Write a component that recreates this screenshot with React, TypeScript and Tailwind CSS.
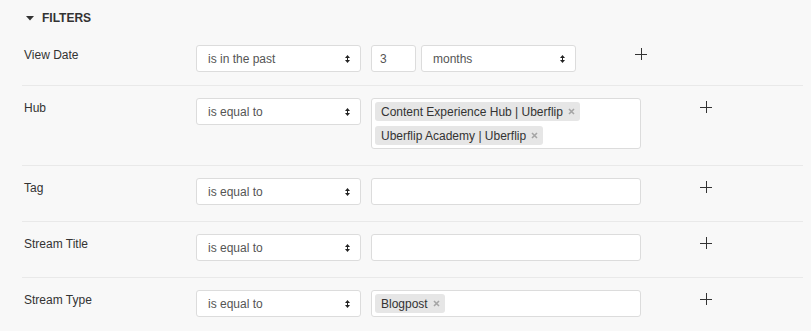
import React from 'react';

type Filter = {
  label: string;
  op: string;
  kind: 'date' | 'multi';
  tags?: string[];
};

const filters: Filter[] = [
  { label: 'View Date', op: 'is in the past', kind: 'date' },
  { label: 'Hub', op: 'is equal to', kind: 'multi', tags: ['Content Experience Hub | Uberflip', 'Uberflip Academy | Uberflip'] },
  { label: 'Tag', op: 'is equal to', kind: 'multi', tags: [] },
  { label: 'Stream Title', op: 'is equal to', kind: 'multi', tags: [] },
  { label: 'Stream Type', op: 'is equal to', kind: 'multi', tags: ['Blogpost'] },
];

function SelectArrows() {
  return (
    <svg width="5" height="8" viewBox="0 0 5 8" className="shrink-0">
      <path d="M2.5 0 L5 3 L0 3 Z" fill="#222" />
      <path d="M2.5 8 L5 5 L0 5 Z" fill="#222" />
      <rect x="2" y="2" width="1" height="4" fill="#222" />
    </svg>
  );
}

function Select({ value, width }: { value: string; width: string }) {
  return (
    <div
      className={`${width} h-[27px] flex items-center justify-between bg-white border border-[#dcdcdc] rounded-[3px] pl-[11px] pr-[10px] text-[12px] text-[#555]`}
    >
      <span>{value}</span>
      <SelectArrows />
    </div>
  );
}

function Tag({ text }: { text: string }) {
  return (
    <span className="h-[19px] inline-flex items-center bg-[#e6e6e6] rounded-[3px] pl-[6px] pr-[5px] text-[12px] text-[#333]">
      {text}
      <svg width="7" height="7" viewBox="0 0 7 7" className="ml-[5px]">
        <path d="M1 1 L6 6 M6 1 L1 6" stroke="#a5a5a5" strokeWidth="1.6" />
      </svg>
    </span>
  );
}

function Plus() {
  return (
    <svg width="12" height="12" viewBox="0 0 12 12" className="ml-[59px] mt-[3px] shrink-0">
      <path d="M6 0 V12 M0 6 H12" stroke="#333" strokeWidth="1" shapeRendering="crispEdges" />
    </svg>
  );
}

export default function App() {
  return (
    <div className="min-h-screen bg-[#f8f8f8] pl-[22px] pr-[8px] font-['Liberation_Sans',Arial,sans-serif]">
      {/* Header */}
      <div className="h-[33px] pt-[10px] flex items-start">
        <div className="flex items-center h-4 pl-[4px] gap-[8px]">
          <svg width="8" height="5" viewBox="0 0 8 5">
            <path d="M0 0 H8 L4 4.5 Z" fill="#333" />
          </svg>
          <span className="text-[12px] leading-4 font-bold text-[#333]">FILTERS</span>
        </div>
      </div>

      {filters.map((f, i) => (
        <div
          key={f.label}
          className={`flex items-start pt-3 ${i === 0 ? 'pb-[13px]' : 'pb-4 border-t border-[#e9e9e9]'}`}
        >
          <div className="w-[174px] pl-[2px] pt-[1px] text-[12px] leading-[18px] text-[#333] shrink-0">
            {f.label}
          </div>
          <Select value={f.op} width="w-[165px]" />
          {f.kind === 'date' ? (
            <div className="flex items-start ml-[10px] gap-[5px]">
              <div className="w-[45px] h-[27px] flex items-center bg-white border border-[#dcdcdc] rounded-[3px] pl-[8px] text-[12px] text-[#555]">
                3
              </div>
              <Select value="months" width="w-[155px]" />
            </div>
          ) : (
            <div className="ml-[10px] w-[270px] min-h-[27px] bg-white border border-[#dcdcdc] rounded-[3px] px-[3px] py-[3px] flex flex-col items-start gap-[5px]">
              {f.tags!.map((t) => (
                <Tag key={t} text={t} />
              ))}
            </div>
          )}
          <Plus />
        </div>
      ))}
    </div>
  );
}
